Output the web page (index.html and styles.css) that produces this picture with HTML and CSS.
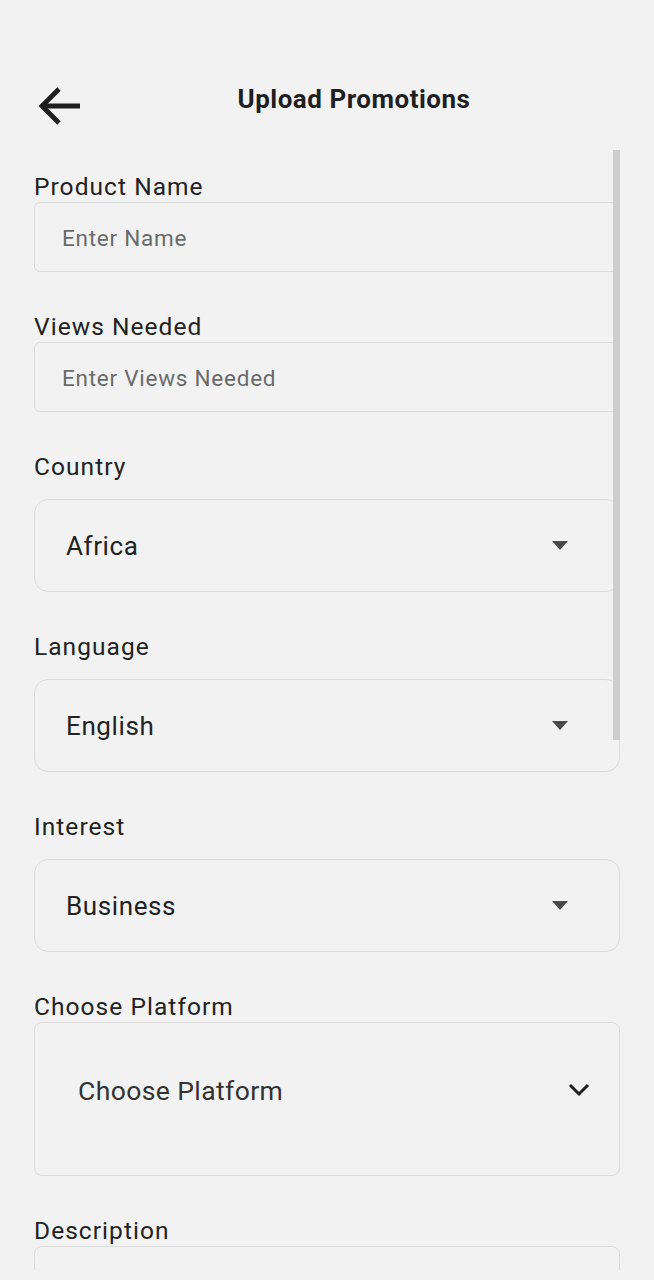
FILE: index.html
```html
<!DOCTYPE html>
<html lang="en">
<head>
<meta charset="utf-8">
<title>Upload Promotions</title>
<link rel="stylesheet" href="styles.css">
</head>
<body>
<div class="app">
  <header class="topbar">
    <button class="back" aria-label="Back">
      <svg width="44" height="40" viewBox="0 0 44 40" fill="none" stroke="#1f1f1f" stroke-width="4.8" stroke-linecap="butt" stroke-linejoin="miter">
        <path d="M4 19 H42"/>
        <path d="M21 2 L4 19 L21 36"/>
      </svg>
    </button>
    <h1 class="title">Upload Promotions</h1>
  </header>

  <main class="form">
    <div class="field">
      <label class="label">Product Name</label>
      <div class="input"><span class="placeholder">Enter Name</span></div>
    </div>
    <div class="field">
      <label class="label">Views Needed</label>
      <div class="input"><span class="placeholder">Enter Views Needed</span></div>
    </div>
    <div class="field">
      <label class="label">Country</label>
      <div class="select"><span class="value">Africa</span><span class="caret"></span></div>
    </div>
    <div class="field">
      <label class="label">Language</label>
      <div class="select"><span class="value">English</span><span class="caret"></span></div>
    </div>
    <div class="field">
      <label class="label">Interest</label>
      <div class="select"><span class="value">Business</span><span class="caret"></span></div>
    </div>
    <div class="field">
      <label class="label">Choose Platform</label>
      <div class="platform">
        <span class="platform-text">Choose Platform</span>
        <svg class="chevron" width="22" height="14" viewBox="0 0 22 14" fill="none" stroke="#1f1f1f" stroke-width="3">
          <path d="M2 2 L11 11 L20 2"/>
        </svg>
      </div>
    </div>
    <div class="field">
      <label class="label">Description</label>
      <div class="textarea"></div>
    </div>
    <div class="scrollbar"></div>
  </main>
</div>
</body>
</html>
```

FILE: styles.css
```css
* { box-sizing: border-box; }
html, body {
  margin: 0;
  padding: 0;
  background: #f2f2f2;
}
body {
  font-family: Roboto, "Noto Sans", sans-serif;
  color: #222;
}
.app {
  width: 654px;
  height: 1280px;
  overflow: hidden;
}
.topbar {
  height: 150px;
  display: flex;
  align-items: flex-start;
  padding: 87px 28px 0 38px;
}
.back {
  border: 0;
  background: none;
  padding: 0;
  margin: 0;
  width: 44px;
  height: 40px;
  display: block;
}
.back svg { display: block; }
.title {
  flex: 1;
  margin: -3px 0 0 0;
  text-align: center;
  font-size: 26px;
  line-height: 30px;
  font-weight: 700;
  letter-spacing: 0.5px;
  color: #1f1f1f;
}
.form {
  position: relative;
  height: 1120px;
  overflow: hidden;
  padding: 23px 34px 0 34px;
}
.field {
  display: flex;
  flex-direction: column;
  margin-bottom: 41px;
}
.label {
  font-size: 24.5px;
  line-height: 28px;
  letter-spacing: 1.05px;
  color: #222;
  margin-bottom: 1px;
}
.input {
  height: 70px;
  border: 1.5px solid #dcdcdc;
  border-radius: 6px;
  display: flex;
  align-items: center;
  padding: 2px 0 0 27px;
}
.placeholder {
  font-size: 22.5px;
  letter-spacing: 0.75px;
  color: #6a6a6a;
}
.select {
  margin-top: 17px;
  height: 93px;
  border: 1.5px solid #dcdcdc;
  border-radius: 14px;
  display: flex;
  align-items: center;
  justify-content: space-between;
  padding: 0 51px 0 31px;
}
.value {
  font-size: 26px;
  letter-spacing: 0.6px;
  color: #222;
}
.caret {
  width: 0;
  height: 0;
  border-left: 8.5px solid transparent;
  border-right: 8.5px solid transparent;
  border-top: 9px solid #4a4a4a;
}
.platform {
  margin-top: 0;
  height: 154px;
  border: 1.5px solid #dcdcdc;
  border-radius: 8px;
  display: flex;
  align-items: center;
  justify-content: space-between;
  padding: 0 29px 18px 43px;
}
.platform-text {
  font-size: 26.5px;
  letter-spacing: 0.4px;
  color: #333;
}
.chevron { display: block; margin-top: 0; }
.textarea {
  height: 120px;
  border: 1.5px solid #dcdcdc;
  border-radius: 8px;
}
.scrollbar {
  position: absolute;
  top: 0;
  right: 34px;
  width: 7px;
  height: 590px;
  background: #cdcdcd;
}
```
